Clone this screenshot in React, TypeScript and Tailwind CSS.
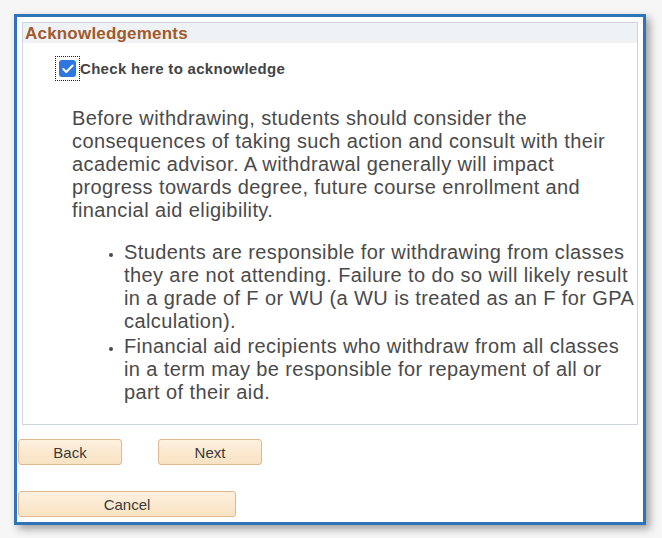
import { Check } from 'lucide-react';

function PeachButton({ label, width }: { label: string; width: string }) {
  return (
    <button
      className={`${width} h-[26px] rounded-[3px] border border-[#e2b98f] bg-gradient-to-b from-[#fdf1df] to-[#f8e2c2] text-[15px] leading-none text-[#3a3a3a] font-['Liberation_Sans',Arial,sans-serif]`}
    >
      {label}
    </button>
  );
}

export default function App() {
  return (
    <div className="w-[662px] h-[538px] bg-[#f6f6f6] pl-[14px] pt-[14px] font-['Liberation_Sans',Arial,sans-serif]">
      <div className="w-[632px] h-[511px] border-[3px] border-[#2f74b8] bg-white shadow-[4px_4px_8px_rgba(0,0,0,0.35)] flex flex-col">
        {/* Acknowledgements panel */}
        <div className="ml-[5px] mt-[5px] w-[616px] h-[403px] border border-[#cfd4da] flex flex-col">
          <div className="h-[20px] bg-[#eef2f4] pl-[2px] flex items-center">
            <span className="text-[17px] tracking-[0.2px] font-bold text-[#a2592b] leading-none">Acknowledgements</span>
          </div>

          <div className="ml-[32px] mt-[13px] flex items-center">
            <div className="p-[3px] border border-dotted border-[#222]">
              <div className="w-[17px] h-[17px] rounded-[3px] bg-[#2f76e0] flex items-center justify-center">
                <Check className="w-[14px] h-[14px] text-white" strokeWidth={3.5} />
              </div>
            </div>
            <span className="text-[15px] tracking-[0.3px] font-bold text-[#444] mt-[2px]">Check here to acknowledge</span>
          </div>

          <div className="ml-[49px] mr-[2px] mt-[26px] text-[20px] tracking-[0.4px] leading-[23px] text-[#4a4a4a]">
            <p>
              Before withdrawing, students should consider the consequences of taking such action and consult with their
              academic advisor. A withdrawal generally will impact progress towards degree, future course enrollment and
              financial aid eligibility.
            </p>
            <ul className="mt-[19px] pl-[52px] list-disc marker:text-[13px]">
              <li className="leading-[23px]">
                Students are responsible for withdrawing from classes they are not attending. Failure to do so will likely
                result in a grade of F or WU (a WU is treated as an F for GPA calculation).
              </li>
              <li className="leading-[23px] mt-[2px]">
                Financial aid recipients who withdraw from all classes in a term may be responsible for repayment of all or
                part of their aid.
              </li>
            </ul>
          </div>
        </div>

        {/* Navigation */}
        <div className="ml-[1px] mt-[14px] flex gap-[36px]">
          <PeachButton label="Back" width="w-[104px]" />
          <PeachButton label="Next" width="w-[104px]" />
        </div>
        <div className="ml-[1px] mt-[26px]">
          <PeachButton label="Cancel" width="w-[218px]" />
        </div>
      </div>
    </div>
  );
}
